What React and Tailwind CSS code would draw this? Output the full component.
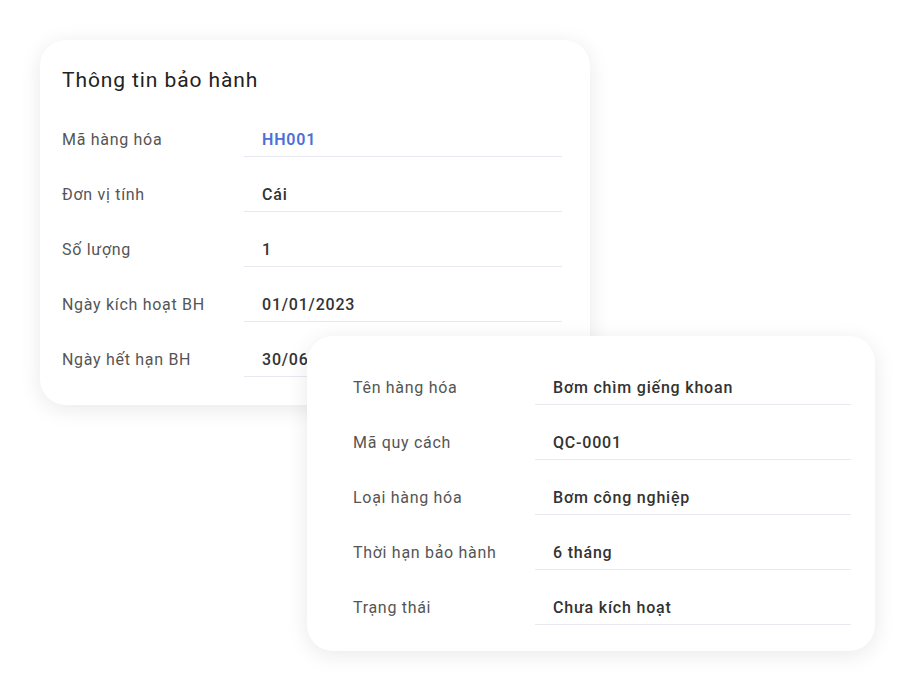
const warranty = [
  { label: 'Mã hàng hóa', value: 'HH001', accent: true },
  { label: 'Đơn vị tính', value: 'Cái' },
  { label: 'Số lượng', value: '1' },
  { label: 'Ngày kích hoạt BH', value: '01/01/2023' },
  { label: 'Ngày hết hạn BH', value: '30/06/2023' },
];

const product = [
  { label: 'Tên hàng hóa', value: 'Bơm chìm giếng khoan' },
  { label: 'Mã quy cách', value: 'QC-0001' },
  { label: 'Loại hàng hóa', value: 'Bơm công nghiệp' },
  { label: 'Thời hạn bảo hành', value: '6 tháng' },
  { label: 'Trạng thái', value: 'Chưa kích hoạt' },
];

function Row({ label, value, accent }) {
  return (
    <div className="grid grid-cols-[182px_1fr] items-end h-[55px]">
      <div className="pb-[6px] text-[16px] leading-[22px] tracking-[0.7px] text-[#555]">{label}</div>
      <div className="pb-[5px] pl-[18px] border-b border-[#e8e9f0] text-[16px] leading-[22px] tracking-[0.8px]">
        {accent ? (
          <span className="font-semibold text-[#4c6fd8]">{value}</span>
        ) : (
          <span className="font-medium text-[#333]">{value}</span>
        )}
      </div>
    </div>
  );
}

export default function App() {
  return (
    <div className="min-h-[700px] bg-white pt-[40px] font-['Roboto',sans-serif]">
      <div className="ml-[40px] w-[550px] rounded-[26px] bg-white pl-[22px] pr-[28px] pt-[26px] pb-[28px] shadow-[0_4px_22px_rgba(0,0,0,0.09)]">
        <h2 className="text-[21px] leading-[28px] tracking-[0.9px] font-normal text-[#222] mb-[8px]">Thông tin bảo hành</h2>
        {warranty.map((r) => (
          <Row key={r.label} {...r} />
        ))}
      </div>
      <div className="relative z-10 ml-[307px] -mt-[69px] w-[568px] rounded-[26px] bg-white pl-[46px] pr-[24px] pt-[14px] pb-[26px] shadow-[0_4px_22px_rgba(0,0,0,0.09)]">
        {product.map((r) => (
          <Row key={r.label} {...r} />
        ))}
      </div>
    </div>
  );
}
